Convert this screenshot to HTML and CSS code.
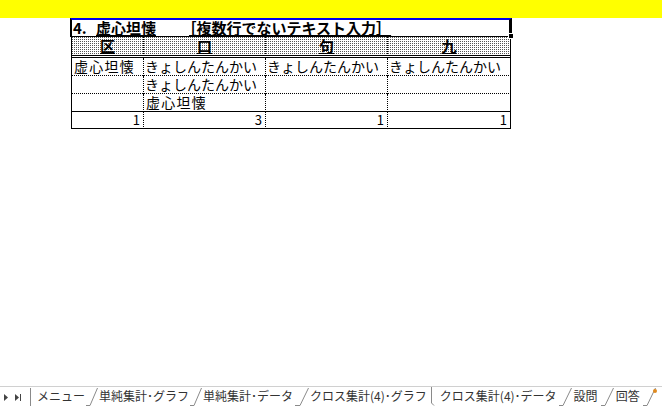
FILE: index.html
```html
<!DOCTYPE html>
<html lang="ja">
<head>
<meta charset="utf-8">
<link rel="stylesheet" href="styles.css">
</head>
<body>
<div class="page">
  <div class="yellow"></div>
  <div class="sheet">
    <div class="block">
      <div class="title"><span class="u"><span class="num">4.</span>虚心坦懐</span>　　<span class="u br">［複数行でないテキスト入力］</span><span class="handle"></span></div>
      <div class="grid">
        <div class="c h first"><span class="u">区</span></div>
        <div class="c h"><span class="u">口</span></div>
        <div class="c h"><span class="u">句</span></div>
        <div class="c h last"><span class="u">九</span></div>

        <div class="c d first kanji">虚心坦懐</div>
        <div class="c d">きょしんたんかい</div>
        <div class="c d">きょしんたんかい</div>
        <div class="c d last">きょしんたんかい</div>

        <div class="c d first"></div>
        <div class="c d">きょしんたんかい</div>
        <div class="c d"></div>
        <div class="c d last"></div>

        <div class="c d first lastrow"></div>
        <div class="c d lastrow kanji">虚心坦懐</div>
        <div class="c d lastrow"></div>
        <div class="c d last lastrow"></div>

        <div class="c t first">1</div>
        <div class="c t">3</div>
        <div class="c t">1</div>
        <div class="c t last">1</div>
      </div>
    </div>
  </div>
  <div class="tabbar">
    <div class="nav">
      <svg width="28" height="19" viewBox="0 0 28 19"><path d="M4 6 L8 9.5 L4 13 Z" fill="#444"/><path d="M15 6 L19 9.5 L15 13 Z" fill="#444"/><rect x="20" y="6" width="1" height="7" fill="#444"/></svg>
    </div>
    <div class="tabs">
      <span class="edge"></span>
      <span class="tab first">メニュー</span>
      <svg class="sep" width="12" height="19" viewBox="0 0 12 19"><path d="M0 18.5 L4 18.5 L11.5 1" fill="none" stroke="#8a8a8a"/></svg>
      <span class="tab">単純集計･グラフ</span>
      <svg class="sep" width="12" height="19" viewBox="0 0 12 19"><path d="M0 18.5 L4 18.5 L11.5 1" fill="none" stroke="#8a8a8a"/></svg>
      <span class="tab">単純集計･データ</span>
      <svg class="sep" width="15" height="19" viewBox="0 0 15 19"><path d="M1 18.5 L6 18.5 L14.5 1" fill="none" stroke="#8a8a8a"/></svg>
      <span class="tab">クロス集計(4)･グラフ</span>
      <svg class="sep" width="12" height="19" viewBox="0 0 12 19"><path d="M3.5 0 L3.5 16 L6 18.5" fill="none" stroke="#8a8a8a"/></svg>
      <span class="tab active">クロス集計(4)･データ</span>
      <svg class="sep" width="14" height="19" viewBox="0 0 14 19"><path d="M1 18.5 L5 18.5 L13.5 1" fill="none" stroke="#8a8a8a"/></svg>
      <span class="tab pad">設問</span>
      <svg class="sep" width="14" height="19" viewBox="0 0 14 19"><path d="M1 18.5 L5 18.5 L13.5 1" fill="none" stroke="#8a8a8a"/></svg>
      <span class="tab pad">回答</span>
      <svg class="sep" width="14" height="19" viewBox="0 0 14 19"><path d="M1 18.5 L5 18.5 L13.5 1" fill="none" stroke="#8a8a8a"/></svg>
      <span class="dot"></span>
    </div>
  </div>
</div>
</body>
</html>
```

FILE: styles.css
```css
html, body {
  margin: 0;
  padding: 0;
  background: #fff;
}
.page {
  width: 662px;
  height: 407px;
  display: flex;
  flex-direction: column;
  overflow: hidden;
  font-family: "Noto Sans CJK JP", "DejaVu Sans", sans-serif;
  color: #000;
}
.yellow {
  height: 18px;
  background: #ffff00;
  flex: none;
}
.sheet {
  flex: 1;
  padding-left: 70px;
}
.block {
  width: 442px;
}
.title {
  position: relative;
  box-sizing: border-box;
  height: 19px;
  border-top: 2px solid #0000ee;
  border-left: 2px solid #000;
  border-right: 3px solid #000;
  border-bottom: 1px solid #000;
  font-size: 15px;
  font-weight: bold;
  line-height: 16px;
  padding-left: 1px;
  white-space: nowrap;
}
.num {
  display: inline-block;
  width: 23px;
}
.br {
  margin-left: 3px;
}
.u {
  text-decoration: underline;
  text-underline-offset: 1px;
}
.handle {
  position: absolute;
  right: -5px;
  bottom: -3px;
  width: 4px;
  height: 4px;
  background: #000;
  border: 1px solid #fff;
}
.grid {
  margin-left: 1px;
  display: grid;
  grid-template-columns: 72px 122px 122px 124px;
  width: 440px;
}
.c {
  box-sizing: border-box;
  border-left: 1px dotted #000;
  font-size: 14px;
  white-space: nowrap;
}
.c.first {
  border-left: 1px solid #000;
}
.c.last {
  border-right: 1px solid #000;
}
.h {
  height: 21px;
  border-bottom: 3px double #000;
  font-weight: bold;
  font-size: 15px;
  text-align: center;
  line-height: 18px;
  background-color: #fff;
  background-image:
    linear-gradient(to bottom, transparent 1px, #fff 1px),
    linear-gradient(to right, #555 1px, #fff 1px);
  background-size: 2px 2px;
}
.d {
  height: 18px;
  border-bottom: 1px dotted #000;
  line-height: 17px;
  padding-left: 1px;
}
.d.kanji {
  letter-spacing: 1.2px;
  padding-left: 2px;
}
.d.lastrow {
  border-bottom: 1px solid #000;
}
.t {
  height: 17px;
  border-bottom: 1px solid #000;
  text-align: right;
  padding-right: 3px;
  font-size: 13px;
  line-height: 16px;
}
.tabbar {
  flex: none;
  height: 20px;
  display: flex;
  align-items: stretch;
  border-top: 1px solid #d0d0d0;
  background: #fff;
}
.nav {
  width: 28px;
  display: flex;
  align-items: center;
}
.tabs {
  display: flex;
  align-items: stretch;
  font-size: 12px;
  color: #333;
  white-space: nowrap;
}
.edge {
  width: 1px;
  background: #8a8a8a;
  margin: 1px 0 1px 2px;
}
.tab {
  padding: 0 1px;
  line-height: 18px;
}
.tab.first {
  padding-left: 6px;
}
.tab.pad {
  padding: 0 2px;
}
.tab.active {
  background: #fff;
  padding: 0 1px 0 0;
}
.sep {
  flex: none;
  display: block;
}
.dot {
  width: 4px;
  height: 4px;
  border-radius: 50%;
  background: #e08a1e;
  margin: 2px 0 0 -3px;
}
```
